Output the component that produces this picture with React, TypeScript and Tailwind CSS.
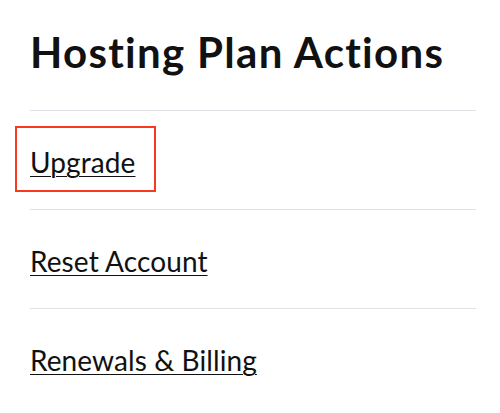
import React from "react";

const actions = ["Upgrade", "Reset Account", "Renewals & Billing"];

export default function App() {
  return (
    <main className="min-h-screen bg-white pl-[30px] pr-[24px] text-[#111111] font-['Lato','Liberation_Sans',sans-serif]">
      <h1 className="pt-[27px] pb-[33px] text-[42px] leading-[50px] font-bold tracking-[1.3px]">
        Hosting Plan Actions
      </h1>
      <ul>
        {actions.map((label, i) => (
          <li key={label} className="border-t border-[#dfe2e6] h-[99px] flex items-center">
            <a href="#" className="relative inline-block text-[28px] leading-[32px] tracking-[0.1px] underline underline-offset-[3px] decoration-1 pt-[4px]">
              {label}
              {i === 0 && (
                <span className="absolute -left-[15px] -right-[21px] -top-[16px] -bottom-[14px] border-2 border-[#f8391f]" />
              )}
            </a>
          </li>
        ))}
      </ul>
    </main>
  );
}
